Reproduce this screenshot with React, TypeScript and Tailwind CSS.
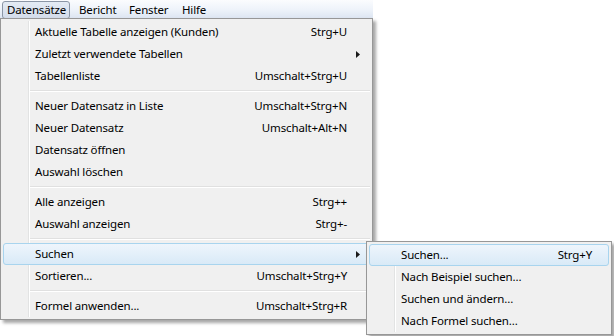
import React from "react";

type Item = { label: string; shortcut?: string; arrow?: boolean; hl?: boolean } | "sep";

const mainItems: Item[] = [
  { label: "Aktuelle Tabelle anzeigen (Kunden)", shortcut: "Strg+U" },
  { label: "Zuletzt verwendete Tabellen", arrow: true },
  { label: "Tabellenliste", shortcut: "Umschalt+Strg+U" },
  "sep",
  { label: "Neuer Datensatz in Liste", shortcut: "Umschalt+Strg+N" },
  { label: "Neuer Datensatz", shortcut: "Umschalt+Alt+N" },
  { label: "Datensatz öffnen" },
  { label: "Auswahl löschen" },
  "sep",
  { label: "Alle anzeigen", shortcut: "Strg++" },
  { label: "Auswahl anzeigen", shortcut: "Strg+-" },
  "sep",
  { label: "Suchen", arrow: true, hl: true },
  { label: "Sortieren...", shortcut: "Umschalt+Strg+Y" },
  "sep",
  { label: "Formel anwenden...", shortcut: "Umschalt+Strg+R" },
];

const subItems: Item[] = [
  { label: "Suchen...", shortcut: "Strg+Y", hl: true },
  { label: "Nach Beispiel suchen..." },
  { label: "Suchen und ändern..." },
  { label: "Nach Formel suchen..." },
];

const font = { fontFamily: '"Noto Sans", "Open Sans", sans-serif' };

function Arrow() {
  return (
    <svg width="4" height="7" viewBox="0 0 4 7" className="block">
      <path d="M0 0 L4 3.5 L0 7 Z" fill="#1a1a1a" />
    </svg>
  );
}

function MenuList({ items, width, shortcutRight, textLeft }: { items: Item[]; width: number; shortcutRight: number; textLeft: number }) {
  return (
    <div className="relative flex flex-col">
      {items.map((it, i) =>
        it === "sep" ? (
          <div key={i} className="h-[8px] flex flex-col justify-center pl-[27px]">
            <div className="h-px bg-[#e0e0e0]" />
            <div className="h-px bg-white" />
          </div>
        ) : (
          <div
            key={i}
            className={
              "relative h-[22px] flex items-center text-[11.5px] tracking-[-0.15px] text-[#000] " +
              (it.hl
                ? "rounded-[3px] border border-[#a8d4ee] bg-gradient-to-b from-[#eef5fc] to-[#d9eaf7]"
                : "border border-transparent")
            }
            style={{ paddingLeft: textLeft - 1 }}
          >
            <span className="whitespace-nowrap">{it.label}</span>
            <span className="flex-1" />
            {it.shortcut && (
              <span className="whitespace-nowrap" style={{ marginRight: shortcutRight }}>
                {it.shortcut}
              </span>
            )}
            {it.arrow && (
              <span className="absolute top-[7px]" style={{ left: width - 17 }}>
                <Arrow />
              </span>
            )}
          </div>
        )
      )}
    </div>
  );
}

export default function App() {
  return (
    <div className="relative w-[614px] h-[336px] bg-white overflow-hidden" style={font}>
      {/* Menu bar */}
      <div className="w-[373px] h-[19px] bg-gradient-to-b from-[#fbfcfe] via-[#eef3fa] to-[#dbe4f1] flex items-center text-[11.5px] tracking-[-0.15px] text-black">
        <div className="ml-[2px] w-[68px] h-[18px] mt-[1px] pl-[4px] flex items-center rounded-[3px] border border-[#8b96a6] bg-gradient-to-b from-[#e4ebf4] to-[#d3dcea]">
          Datensätze
        </div>
        <div className="ml-[9px] w-[50px]">Bericht</div>
        <div className="w-[53px]">Fenster</div>
        <div>Hilfe</div>
      </div>

      {/* Main dropdown */}
      <div className="absolute left-0 top-[18px] w-[373px] bg-[#f0f0f0] border border-[#979797] p-[2px] shadow-[3px_3px_3px_rgba(0,0,0,0.35)]">
        <div className="absolute top-[2px] bottom-[2px] left-[27px] w-[2px] flex">
          <div className="w-px bg-[#e2e3e3]" />
          <div className="w-px bg-white" />
        </div>
        <MenuList items={mainItems} width={369} shortcutRight={22} textLeft={32} />
      </div>

      {/* Submenu */}
      <div className="absolute left-[366px] top-[241px] w-[246px] bg-[#f0f0f0] border border-[#979797] p-[2px] shadow-[3px_3px_3px_rgba(0,0,0,0.35)]">
        <div className="absolute top-[2px] bottom-[2px] left-[27px] w-[2px] flex">
          <div className="w-px bg-[#e2e3e3]" />
          <div className="w-px bg-white" />
        </div>
        <MenuList items={subItems} width={242} shortcutRight={16} textLeft={32} />
      </div>
    </div>
  );
}
